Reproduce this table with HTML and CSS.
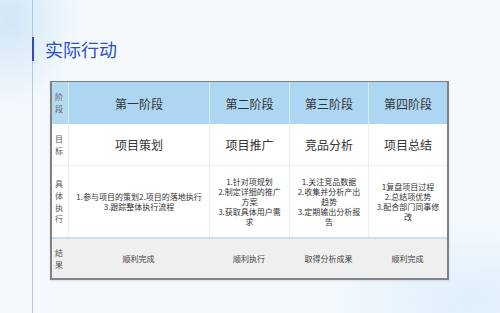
FILE: index.html
```html
<!DOCTYPE html>
<html lang="zh">
<head>
<meta charset="utf-8">
<link rel="stylesheet" href="styles.css">
</head>
<body>
<div class="page">
  <div class="frame">
    <h1 class="title">实际行动</h1>
    <div class="table">
      <div class="cell head side">阶<br>段</div>
      <div class="cell head">第一阶段</div>
      <div class="cell head">第二阶段</div>
      <div class="cell head">第三阶段</div>
      <div class="cell head">第四阶段</div>

      <div class="cell goal side">目<br>标</div>
      <div class="cell goal">项目策划</div>
      <div class="cell goal">项目推广</div>
      <div class="cell goal">竞品分析</div>
      <div class="cell goal">项目总结</div>

      <div class="cell act side">具<br>体<br>执<br>行</div>
      <div class="cell act">1.参与项目的策划2.项目的落地执行<br>3.跟踪整体执行流程</div>
      <div class="cell act">1.针对项规划<br>2.制定详细的推广方案<br>3.获取具体用户需求</div>
      <div class="cell act">1.关注竞品数据<br>2.收集并分析产出趋势<br>3.定期输出分析报告</div>
      <div class="cell act">1复盘项目过程<br>2.总结项优势<br>3.配合部门同事修改</div>

      <div class="cell res side">结<br>果</div>
      <div class="cell res">顺利完成</div>
      <div class="cell res">顺利执行</div>
      <div class="cell res">取得分析成果</div>
      <div class="cell res">顺利完成</div>
    </div>
  </div>
</div>
</body>
</html>
```

FILE: styles.css
```css
html, body {
  margin: 0;
  padding: 0;
}
body {
  width: 500px;
  height: 313px;
  overflow: hidden;
  font-family: "Noto Sans CJK SC", "Noto Sans", sans-serif;
}
.page {
  width: 500px;
  height: 313px;
  background:
    radial-gradient(ellipse 70px 90px at 10px 20px, rgba(205, 228, 246, 0.9), rgba(205, 228, 246, 0) 100%),
    radial-gradient(ellipse 150px 80px at 470px 300px, rgba(215, 236, 250, 0.8), rgba(215, 236, 250, 0) 100%),
    #f5f9fd;
}
.frame {
  margin-left: 32px;
  height: 313px;
  border-left: 1px solid #b4c8e2;
  box-sizing: border-box;
  padding-top: 37px;
}
.title {
  margin: 0 0 0 -1px;
  height: 24px;
  line-height: 24px;
  border-left: 2px solid #2a4cc0;
  padding-left: 11px;
  font-size: 18px;
  font-weight: normal;
  color: #2b4fc6;
  letter-spacing: 0;
}
.table {
  margin: 20px 0 0 17px;
  width: 399px;
  box-sizing: border-box;
  border: 2px solid #818181;
  border-top-width: 1px;
  display: grid;
  grid-template-columns: 16px 141px 80px 79px 79px;
  grid-template-rows: 42px 42px 71px 41px;
  box-shadow: 0 1px 2px rgba(120, 140, 170, 0.25);
  background: #fff;
}
.cell {
  display: flex;
  align-items: center;
  justify-content: center;
  text-align: center;
  color: #333;
  box-sizing: border-box;
  border-left: 1px solid #ececec;
}
.cell.side {
  justify-content: flex-start;
  text-align: left;
  padding-left: 3px;
  font-size: 8px;
  line-height: 11.6px;
  border-left: none;
  color: #555;
}
.head {
  background: #acd6f1;
  border-left-color: #d6ebf8;
  font-size: 12px;
}
.head.side {
  background: #b4daf2;
  color: #666;
}
.goal {
  font-size: 12px;
  border-bottom: 1px solid #eeeeee;
}
.act {
  font-size: 8px;
  line-height: 10px;
  padding: 0 6px;
}
.act.side {
  font-size: 8px;
  line-height: 11.6px;
}
.res {
  background: #efefef;
  border-top: 2px solid #c7e1f0;
  border-left: none;
  font-size: 8px;
  color: #444;
}
```
